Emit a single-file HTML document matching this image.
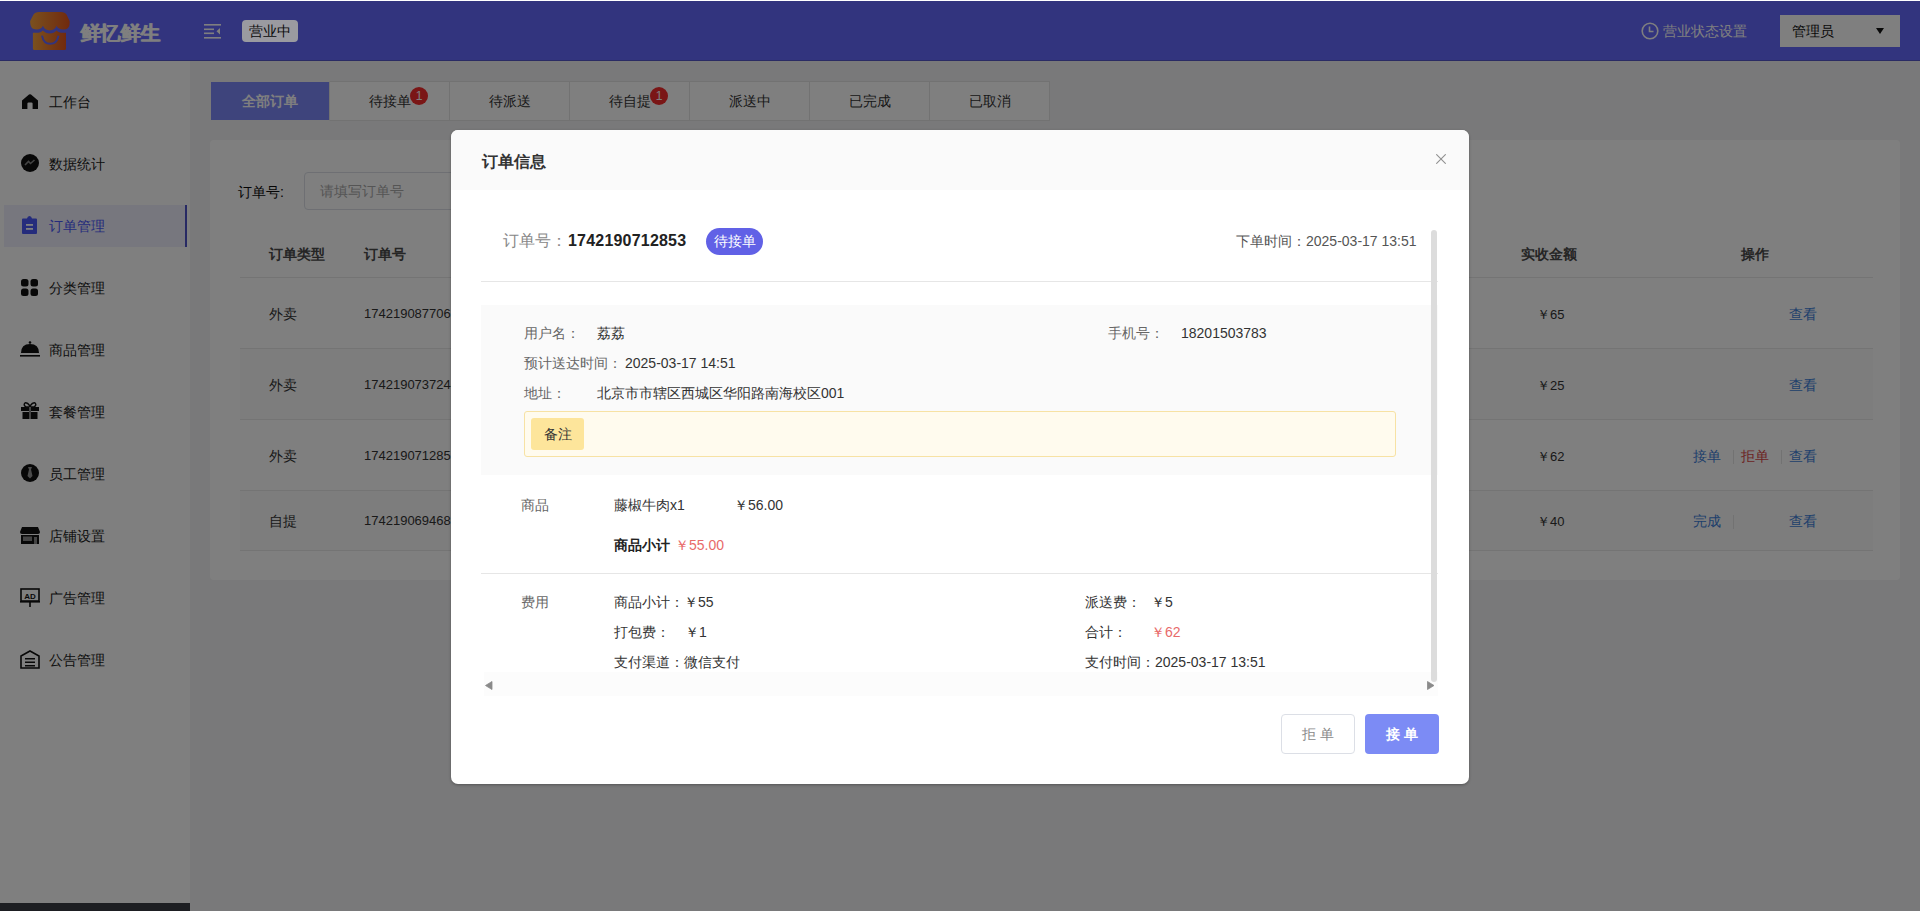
<!DOCTYPE html>
<html><head><meta charset="utf-8">
<style>
*{margin:0;padding:0;box-sizing:border-box}
html,body{width:1920px;height:911px;overflow:hidden;background:#f2f2f4;font-family:"Liberation Sans",sans-serif;color:#333;font-size:14px}
.a{position:absolute;white-space:nowrap}
#top{position:absolute;left:0;top:0;width:1920px;height:1px;background:#fff;z-index:50}
#hdr{position:absolute;left:0;top:1px;width:1920px;height:60px;background:#6568fc;border-bottom:1px solid #5557c8}
#side{position:absolute;left:0;top:61px;width:190px;height:850px;background:#fff}
#main{position:absolute;left:190px;top:61px;width:1730px;height:850px;background:#f2f2f4}
#mask{position:absolute;left:0;top:0;width:1920px;height:911px;background:rgba(0,0,0,.5);z-index:10}
#dlg{position:absolute;left:451px;top:130px;width:1018px;height:654px;background:#fff;border-radius:7px;z-index:20;overflow:hidden;box-shadow:0 1px 3px rgba(0,0,0,.3)}
.logo{font-size:20px;font-weight:bold;color:#fff;left:80px;top:19px;letter-spacing:0;text-shadow:0.5px 0 0 #fff}
.tag{left:242px;top:19px;width:56px;height:22px;border-radius:4px;background:#9a9aa0;color:#0a0a0a;z-index:12;font-size:14px;line-height:22px;text-align:center}
.mi{left:49px;font-size:14px;color:#222;line-height:20px}
.ic{position:absolute;left:20px}
.tabs{position:absolute;left:210px;top:81px;height:40px;display:flex}
.tab{width:120px;height:40px;border:1px solid #e4e4e4;border-left:none;background:#fff;color:#333;font-size:14px;line-height:38px;text-align:center;position:relative}
.tab.on{background:#7b8cf5;color:#fff;border-color:#f2f2f4;border-right-color:#e4e4e4;font-weight:bold;background:#7d89f8}
.badge{position:absolute;width:18px;height:18px;border-radius:50%;background:#f52c2c;color:#fff;font-size:12px;line-height:18px;text-align:center;top:5px}
#card{position:absolute;left:210px;top:140px;width:1690px;height:440px;background:#fff;border-radius:4px}
.th{font-weight:bold;color:#4a4a4a;font-size:14px;top:246px}
.td{font-size:14px;color:#333}
.lk{color:#3e7fd8;font-size:14px}
.rd{color:#d94646;font-size:14px}
.hl{position:absolute;height:1px;background:#e8e8e8}
.g{color:#888}
.k{color:#333}
</style></head><body>
<div id="top"></div>
<div id="hdr">
  <svg class="a" style="left:30px;top:10px" width="40" height="40" viewBox="0 0 40 40">
    <defs><linearGradient id="lg" x1="0" y1="0" x2="1" y2="0"><stop offset="0" stop-color="#f5a23e"/><stop offset="1" stop-color="#e2541c"/></linearGradient></defs>
    <path d="M9 1 L31 1 Q35 1 36.5 3.5 L39.6 10 Q40.4 18.6 33.2 18.6 Q28.4 18.6 26.6 14.8 Q24.6 19.4 19.8 19.4 Q15 19.4 12.9 14.8 Q11.2 18.6 6.6 18.6 Q-0.4 18.6 0.2 10 L3.5 3.5 Q5 1 9 1 Z" fill="url(#lg)"/>
    <path d="M2.9 21.7 H8.5 Q11.5 21.7 12.9 19.6 Q15.5 22.6 19.8 22.6 Q24 22.6 26.6 19.6 Q28 21.7 31 21.7 H36 V37.5 Q36 39 34.5 39 H4.4 Q2.9 39 2.9 37.5 Z" fill="url(#lg)"/>
    <path d="M12 24.6 Q13.5 32.8 20.2 32.8 Q27 32.8 28.5 24.6" stroke="#6568fc" stroke-width="2" fill="none"/>
  </svg>
  <div class="a logo">鲜忆鲜生</div>
  <svg class="a" style="left:204px;top:23px" width="17" height="15" viewBox="0 0 17 15"><rect x="0" y="0" width="17" height="1.6" fill="#fff"/><rect x="0" y="4.5" width="10" height="1.6" fill="#fff"/><rect x="0" y="8.5" width="10" height="1.6" fill="#fff"/><rect x="0" y="13" width="17" height="1.6" fill="#fff"/><path d="M16 4 L12.5 7.3 L16 10.5 Z" fill="#fff"/></svg>
  <div class="a tag">营业中</div>
  <svg class="a" style="left:1641px;top:21px" width="18" height="18" viewBox="0 0 18 18"><circle cx="9" cy="9" r="7.8" stroke="#fff" stroke-width="1.6" fill="none"/><path d="M8.5 4.5 V9.5 H12.5" stroke="#fff" stroke-width="1.6" fill="none"/></svg>
  <div class="a" style="left:1663px;top:21px;font-size:14px;color:#fff;line-height:18px">营业状态设置</div>
  <div class="a" style="left:1780px;top:14px;width:120px;height:32px;background:#fff"></div>
  <div class="a" style="left:1792px;top:21px;font-size:14px;color:#111;line-height:18px">管理员</div>
  <svg class="a" style="left:1876px;top:27px" width="8" height="6" viewBox="0 0 8 6"><path d="M0 0 H8 L4 6 Z" fill="#111"/></svg>
</div>
<div id="side">
  <div class="a" style="left:4px;top:144px;width:181px;height:42px;background:#efeffc"></div>
  <div class="a" style="left:185px;top:144px;width:2px;height:42px;background:#5055c8"></div>
</div>
<div id="sidecontent">
  <svg class="ic" style="top:94px;left:22px" width="16" height="15" viewBox="0 0 16 15"><path d="M7 0.6 Q8 -0.2 9 0.6 L16 6.5 V15 H10.6 V9.6 Q10.6 8.4 9.4 8.4 H6.6 Q5.4 8.4 5.4 9.6 V15 H0 V6.5 Z" fill="#111"/></svg>
  <div class="a mi" style="top:92px">工作台</div>
  <svg class="ic" style="top:154px;left:21px" width="18" height="18" viewBox="0 0 18 18"><circle cx="9" cy="9" r="9" fill="#111"/><path d="M4 11 L7.5 7.5 L9.5 9.5 L13.5 6" stroke="#888" stroke-width="1.6" fill="none"/></svg>
  <div class="a mi" style="top:154px">数据统计</div>
  <svg class="ic" style="top:216px;left:22px" width="15" height="18" viewBox="0 0 15 18"><path d="M1 2.5 H5 Q5.5 0 7.5 0 Q9.5 0 10 2.5 H14 Q15 2.5 15 3.5 V17 Q15 18 14 18 H1 Q0 18 0 17 V3.5 Q0 2.5 1 2.5 Z" fill="#4a58f8"/><rect x="4" y="8" width="7" height="1.8" fill="#fff"/><rect x="4" y="12" width="7" height="1.8" fill="#fff"/></svg>
  <div class="a mi" style="top:216px;color:#4a58f8">订单管理</div>
  <svg class="ic" style="top:279px;left:21px" width="17" height="17" viewBox="0 0 17 17"><rect x="0" y="0" width="7.5" height="7.5" rx="2.5" fill="#111"/><rect x="9.5" y="0" width="7.5" height="7.5" rx="2.5" fill="#111"/><rect x="0" y="9.5" width="7.5" height="7.5" rx="2.5" fill="#111"/><rect x="9.5" y="9.5" width="7.5" height="7.5" rx="2.5" fill="#111"/></svg>
  <div class="a mi" style="top:278px">分类管理</div>
  <svg class="ic" style="top:341px;left:20px" width="20" height="16" viewBox="0 0 20 16"><circle cx="10" cy="1.5" r="1.3" fill="#111"/><path d="M1 12 Q1 3 10 3 Q19 3 19 12 Z" fill="#111"/><rect x="0" y="14" width="20" height="1.6" fill="#111"/></svg>
  <div class="a mi" style="top:340px">商品管理</div>
  <svg class="ic" style="top:402px;left:21px" width="18" height="17" viewBox="0 0 18 17"><path d="M4 1 Q6 0 9 4 Q12 0 14 1 Q16 3 13 5 H5 Q2 3 4 1 Z" fill="none" stroke="#111" stroke-width="1.4"/><rect x="0" y="5" width="18" height="4" fill="#111"/><rect x="1.5" y="10" width="15" height="7" fill="#111"/><rect x="8" y="5" width="2" height="12" fill="#888"/></svg>
  <div class="a mi" style="top:402px">套餐管理</div>
  <svg class="ic" style="top:464px;left:21px" width="18" height="18" viewBox="0 0 18 18"><circle cx="9" cy="9" r="9" fill="#111"/><path d="M7 3 H11 L10 5.5 L11.5 12 L9 14.5 L6.5 12 L8 5.5 Z" fill="#999"/></svg>
  <div class="a mi" style="top:464px">员工管理</div>
  <svg class="ic" style="top:527px;left:20px" width="20" height="17" viewBox="0 0 20 17"><path d="M2 0 H18 L20 5 Q20 7 18 7 H2 Q0 7 0 5 Z" fill="#111"/><rect x="1" y="8" width="18" height="9" fill="#111"/><rect x="3" y="9.5" width="9" height="4.5" fill="#888"/><rect x="14" y="10" width="3" height="7" fill="#888"/></svg>
  <div class="a mi" style="top:526px">店铺设置</div>
  <svg class="ic" style="top:588px;left:20px" width="20" height="19" viewBox="0 0 20 19"><rect x="1" y="1" width="18" height="12" fill="none" stroke="#111" stroke-width="1.6"/><text x="10" y="10.5" font-size="8" font-family="Liberation Sans" font-weight="bold" text-anchor="middle" fill="#111">AD</text><rect x="0" y="13" width="20" height="1.6" fill="#111"/><rect x="9.2" y="14" width="1.6" height="5" fill="#111"/></svg>
  <div class="a mi" style="top:588px">广告管理</div>
  <svg class="ic" style="top:650px;left:20px" width="20" height="19" viewBox="0 0 20 19"><path d="M10 1 L19 6 V18 H1 V6 Z" fill="none" stroke="#111" stroke-width="1.6"/><rect x="5" y="8" width="10" height="1.5" fill="#111"/><rect x="5" y="11.5" width="10" height="1.5" fill="#111"/><rect x="5" y="15" width="10" height="1.5" fill="#111"/></svg>
  <div class="a mi" style="top:650px">公告管理</div>
</div>
<div class="a" style="left:0;top:903px;width:190px;height:8px;background:#3a3c44;z-index:5"></div>
<div id="main"></div>
<div class="tabs">
  <div class="tab on" style="border-left:1px solid #f2f2f4">全部订单</div>
  <div class="tab">待接单<span class="badge" style="left:80px">1</span></div>
  <div class="tab">待派送</div>
  <div class="tab">待自提<span class="badge" style="left:80px">1</span></div>
  <div class="tab">派送中</div>
  <div class="tab">已完成</div>
  <div class="tab">已取消</div>
</div>
<div id="card"></div>
<div class="a" style="left:238px;top:182px;font-size:14px;color:#0a0a0a;line-height:20px">订单号:</div>
<div class="a" style="left:304px;top:172px;width:300px;height:38px;border:1px solid #dcdfe6;border-radius:4px;background:#fff"></div>
<div class="a" style="left:320px;top:181px;font-size:14px;color:#aaa;line-height:20px">请填写订单号</div>
<div class="a th" style="left:269px">订单类型</div>
<div class="a th" style="left:364px">订单号</div>
<div class="a th" style="left:1521px">实收金额</div>
<div class="a th" style="left:1741px">操作</div>
<div class="hl" style="left:240px;top:277px;width:1633px"></div>
<div class="a" style="left:240px;top:349px;width:1633px;height:71px;background:#fafafa"></div>
<div class="a" style="left:240px;top:491px;width:1633px;height:59px;background:#fafafa"></div>
<div class="hl" style="left:240px;top:348px;width:1633px"></div>
<div class="hl" style="left:240px;top:419px;width:1633px"></div>
<div class="hl" style="left:240px;top:490px;width:1633px"></div>
<div class="hl" style="left:240px;top:550px;width:1633px"></div>
<div class="a td" style="left:269px;top:306px">外卖</div>
<div class="a td" style="left:364px;top:306px;font-size:13px">1742190877063</div>
<div class="a td" style="left:1537px;font-size:13px;top:306px">￥65</div>
<div class="a lk" style="left:1789px;top:306px">查看</div>
<div class="a td" style="left:269px;top:377px">外卖</div>
<div class="a td" style="left:364px;top:377px;font-size:13px">1742190737244</div>
<div class="a td" style="left:1537px;font-size:13px;top:377px">￥25</div>
<div class="a lk" style="left:1789px;top:377px">查看</div>
<div class="a td" style="left:269px;top:448px">外卖</div>
<div class="a td" style="left:364px;top:448px;font-size:13px">1742190712853</div>
<div class="a td" style="left:1537px;font-size:13px;top:448px">￥62</div>
<div class="a lk" style="left:1693px;top:448px">接单</div>
<div class="a rd" style="left:1741px;top:448px">拒单</div>
<div class="a lk" style="left:1789px;top:448px">查看</div>
<div class="a td" style="left:269px;top:513px">自提</div>
<div class="a td" style="left:364px;top:513px;font-size:13px">1742190694685</div>
<div class="a td" style="left:1537px;font-size:13px;top:513px">￥40</div>
<div class="a lk" style="left:1693px;top:513px">完成</div>
<div class="a lk" style="left:1789px;top:513px">查看</div>
<div class="a" style="left:1733px;top:450px;width:1px;height:14px;background:#e4e4e4"></div><div class="a" style="left:1781px;top:450px;width:1px;height:14px;background:#e4e4e4"></div><div class="a" style="left:1733px;top:515px;width:1px;height:14px;background:#e4e4e4"></div>
<div id="mask"></div>
<div id="dlg">
  <div class="a" style="left:0;top:0;width:1018px;height:60px;background:#fafafa"></div>
  <div class="a" style="left:31px;top:21px;font-size:16px;font-weight:bold;color:#333;line-height:22px">订单信息</div>
  <svg class="a" style="left:985px;top:24px" width="10" height="10" viewBox="0 0 10 10"><path d="M0.3 0.3 L9.7 9.7 M9.7 0.3 L0.3 9.7" stroke="#909090" stroke-width="1.1"/></svg>
  <div class="a" style="left:52px;top:101px;font-size:16px;color:#888;line-height:20px">订单号：</div>
  <div class="a" style="left:117px;top:101px;font-size:16px;font-weight:bold;color:#222;line-height:20px;letter-spacing:0.2px">1742190712853</div>
  <div class="a" style="left:255px;top:98px;width:57px;height:27px;border-radius:14px;background:#6161e6;color:#fff;font-size:14px;line-height:27px;text-align:center">待接单</div>
  <div class="a" style="left:785px;top:102px;font-size:14px;color:#555;line-height:18px">下单时间：2025-03-17 13:51</div>
  <div class="a" style="left:30px;top:151px;width:957px;height:1px;background:#e6e6e6"></div>
  <div class="a" style="left:30px;top:175px;width:957px;height:170px;background:#fafafa"></div>
  <div class="a" style="left:73px;top:194px;font-size:14px;color:#666;line-height:18px">用户名：</div>
  <div class="a" style="left:146px;top:194px;font-size:14px;color:#333;line-height:18px">荔荔</div>
  <div class="a" style="left:657px;top:194px;font-size:14px;color:#666;line-height:18px">手机号：</div>
  <div class="a" style="left:730px;top:194px;font-size:14px;color:#333;line-height:18px">18201503783</div>
  <div class="a" style="left:73px;top:224px;font-size:14px;color:#666;line-height:18px">预计送达时间：</div>
  <div class="a" style="left:174px;top:224px;font-size:14px;color:#333;line-height:18px">2025-03-17 14:51</div>
  <div class="a" style="left:73px;top:254px;font-size:14px;color:#666;line-height:18px">地址：</div>
  <div class="a" style="left:146px;top:254px;font-size:14px;color:#333;line-height:18px">北京市市辖区西城区华阳路南海校区001</div>
  <div class="a" style="left:73px;top:281px;width:872px;height:46px;background:#fffbee;border:1px solid #f7e2a4;border-radius:3px"></div>
  <div class="a" style="left:80px;top:288px;width:53px;height:32px;background:#fde59b;border-radius:3px;color:#333;font-size:14px;line-height:32px;text-align:center">备注</div>
  <div class="a" style="left:70px;top:366px;font-size:14px;color:#666;line-height:18px">商品</div>
  <div class="a" style="left:163px;top:366px;font-size:14px;color:#333;line-height:18px">藤椒牛肉x1</div>
  <div class="a" style="left:283px;top:366px;font-size:14px;color:#333;line-height:18px">￥56.00</div>
  <div class="a" style="left:163px;top:406px;font-size:14px;font-weight:bold;color:#222;line-height:18px">商品小计</div>
  <div class="a" style="left:224px;top:406px;font-size:14px;color:#e86a6a;line-height:18px">￥55.00</div>
  <div class="a" style="left:30px;top:443px;width:957px;height:1px;background:#e6e6e6"></div>
  <div class="a" style="left:70px;top:463px;font-size:14px;color:#666;line-height:18px">费用</div>
  <div class="a" style="left:163px;top:463px;font-size:14px;color:#333;line-height:18px">商品小计：￥55</div>
  <div class="a" style="left:634px;top:463px;font-size:14px;color:#333;line-height:18px">派送费：</div>
  <div class="a" style="left:700px;top:463px;font-size:14px;color:#333;line-height:18px">￥5</div>
  <div class="a" style="left:163px;top:493px;font-size:14px;color:#333;line-height:18px">打包费：</div>
  <div class="a" style="left:234px;top:493px;font-size:14px;color:#333;line-height:18px">￥1</div>
  <div class="a" style="left:634px;top:493px;font-size:14px;color:#333;line-height:18px">合计：</div>
  <div class="a" style="left:700px;top:493px;font-size:14px;color:#e86a6a;line-height:18px">￥62</div>
  <div class="a" style="left:163px;top:523px;font-size:14px;color:#333;line-height:18px">支付渠道：微信支付</div>
  <div class="a" style="left:634px;top:523px;font-size:14px;color:#333;line-height:18px">支付时间：2025-03-17 13:51</div>
  <div class="a" style="left:33px;top:542px;width:954px;height:24px;background:#fcfcfc"></div>
  <div class="a" style="left:980px;top:100px;width:6px;height:452px;background:#dcdcdc;border-radius:3px"></div>
  <svg class="a" style="left:34px;top:551px" width="8" height="9" viewBox="0 0 8 9"><path d="M7 0.5 V8.5 L0.5 4.5 Z" fill="#8a8a8a" stroke="#8a8a8a" stroke-width="0.8" stroke-linejoin="round"/></svg>
  <svg class="a" style="left:976px;top:551px" width="8" height="9" viewBox="0 0 8 9"><path d="M0.5 0.5 V8.5 L7 4.5 Z" fill="#8a8a8a" stroke="#8a8a8a" stroke-width="0.8" stroke-linejoin="round"/></svg>
  <div class="a" style="left:830px;top:584px;width:74px;height:40px;border:1px solid #dcdfe6;border-radius:4px;background:#fff;color:#888;font-size:14px;line-height:38px;text-align:center;letter-spacing:4px;text-indent:4px">拒单</div>
  <div class="a" style="left:914px;top:584px;width:74px;height:40px;border-radius:4px;background:#7c8bf5;color:#fff;font-size:14px;line-height:40px;text-align:center;letter-spacing:4px;text-indent:4px;font-weight:bold">接单</div>
</div>
</body></html>
